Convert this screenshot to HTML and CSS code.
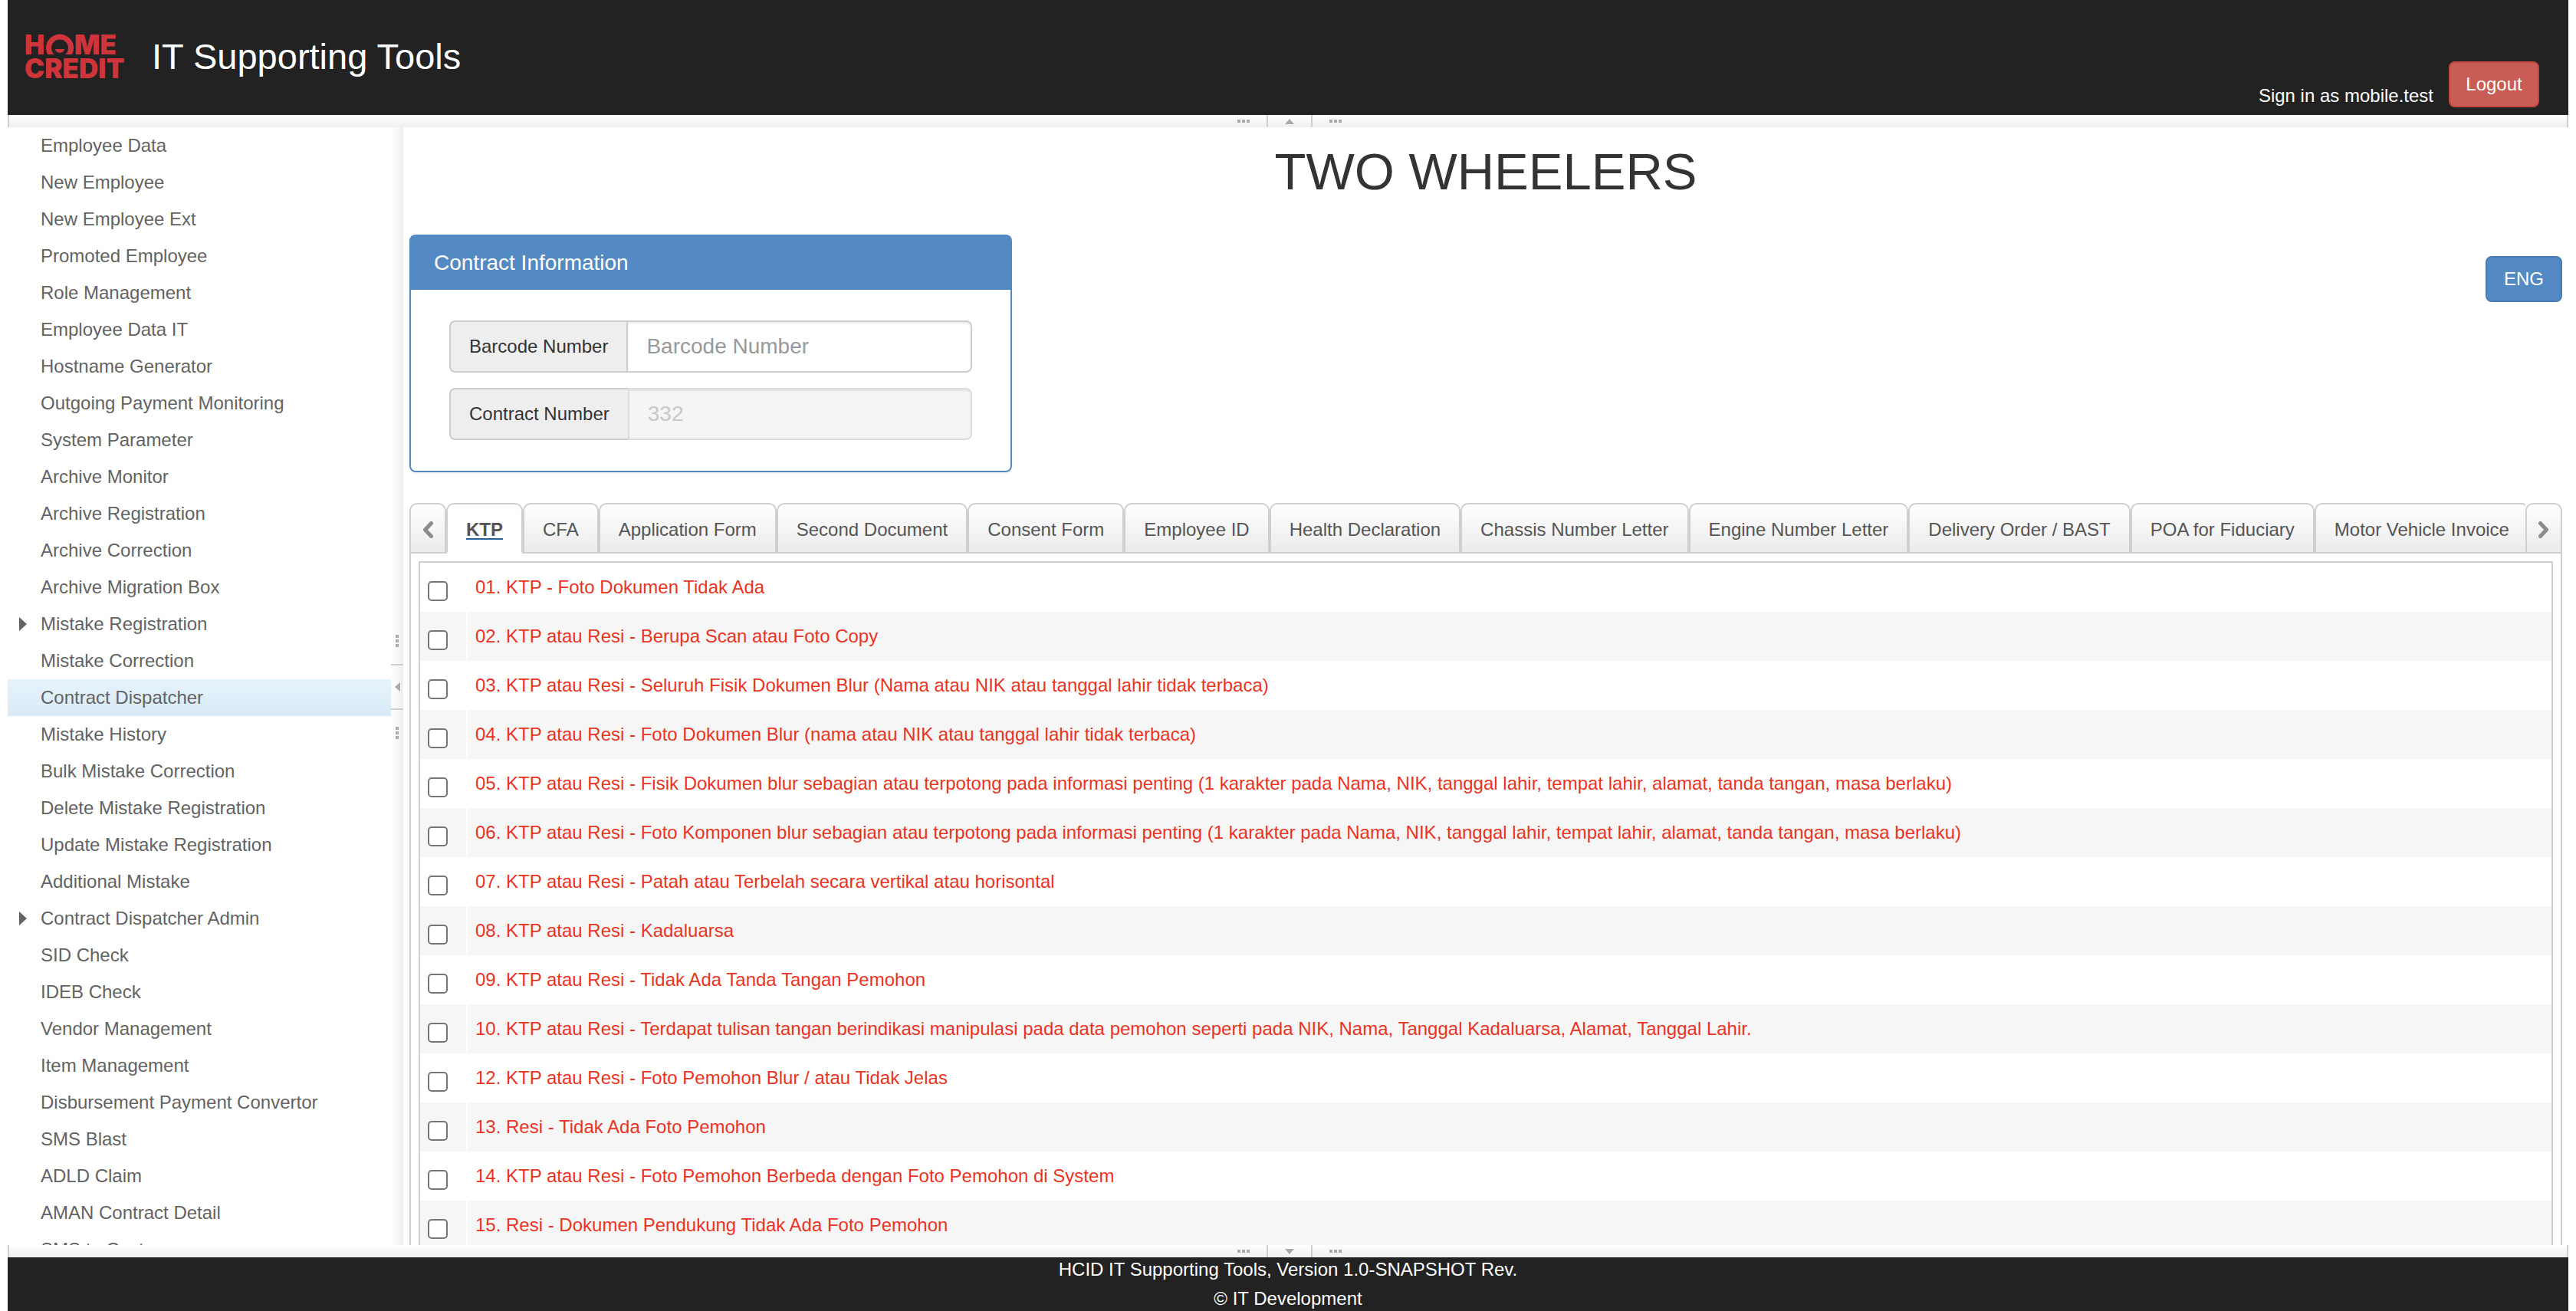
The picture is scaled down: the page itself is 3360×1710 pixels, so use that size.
FILE: index.html
```html
<!DOCTYPE html>
<html lang="en">
<head>
<meta charset="utf-8">
<meta name="viewport" content="width=device-width, initial-scale=1">
<title>IT Supporting Tools</title>
<link rel="stylesheet" href="styles.css">
</head>
<body>
<header class="header">
  <svg class="logo" viewBox="0 0 136 60" role="img" aria-label="Home Credit">
    <text x="0" y="27" class="logo-text">H</text>
    <text x="65" y="27" class="logo-text">ME</text>
    <text x="0" y="58" class="logo-text">CREDIT</text>
    <path d="M30.100 27A18 18 0 1 1 61.900 27H53A11 11 0 1 0 39 27z"/>
    <path d="M40 20h12a6 5 0 0 1-12 0z"/>
  </svg>
  <h1 class="brand">IT Supporting Tools</h1>
  <div class="account">
    <span>Sign in as mobile.test</span>
    <button type="button" class="btn btn-danger">Logout</button>
  </div>
</header>
<div class="splitter">
  <span class="grip"></span>
  <button type="button" class="collapse" aria-label="Collapse header"><svg width="12" height="7" viewBox="0 0 12 7"><path d="M6 0l6 7H0z"/></svg></button>
  <span class="grip"></span>
</div>
<div class="center">
  <nav class="sidebar">
    <ul class="menu">
      <li><a href="#">Employee Data</a></li>
      <li><a href="#">New Employee</a></li>
      <li><a href="#">New Employee Ext</a></li>
      <li><a href="#">Promoted Employee</a></li>
      <li><a href="#">Role Management</a></li>
      <li><a href="#">Employee Data IT</a></li>
      <li><a href="#">Hostname Generator</a></li>
      <li><a href="#">Outgoing Payment Monitoring</a></li>
      <li><a href="#">System Parameter</a></li>
      <li><a href="#">Archive Monitor</a></li>
      <li><a href="#">Archive Registration</a></li>
      <li><a href="#">Archive Correction</a></li>
      <li><a href="#">Archive Migration Box</a></li>
      <li><a href="#" class="parent">Mistake Registration</a></li>
      <li><a href="#">Mistake Correction</a></li>
      <li><a href="#" class="selected">Contract Dispatcher</a></li>
      <li><a href="#">Mistake History</a></li>
      <li><a href="#">Bulk Mistake Correction</a></li>
      <li><a href="#">Delete Mistake Registration</a></li>
      <li><a href="#">Update Mistake Registration</a></li>
      <li><a href="#">Additional Mistake</a></li>
      <li><a href="#" class="parent">Contract Dispatcher Admin</a></li>
      <li><a href="#">SID Check</a></li>
      <li><a href="#">IDEB Check</a></li>
      <li><a href="#">Vendor Management</a></li>
      <li><a href="#">Item Management</a></li>
      <li><a href="#">Disbursement Payment Convertor</a></li>
      <li><a href="#">SMS Blast</a></li>
      <li><a href="#">ADLD Claim</a></li>
      <li><a href="#">AMAN Contract Detail</a></li>
      <li><a href="#">SMS to Customer</a></li>
    </ul>
  </nav>
  <div class="splitter splitter-vertical">
    <span class="grip"></span>
    <button type="button" class="collapse" aria-label="Collapse menu"><svg width="7" height="12" viewBox="0 0 7 12"><path d="M0 6l7-6v12z"/></svg></button>
    <span class="grip"></span>
  </div>
  <main class="main">
    <h2 class="page-title">TWO WHEELERS</h2>
    <div class="top-row">
      <section class="panel">
        <h3 class="panel-heading">Contract Information</h3>
        <div class="panel-body">
          <div class="input-group">
            <label for="barcode">Barcode Number</label>
            <input id="barcode" type="text" placeholder="Barcode Number">
          </div>
          <div class="input-group">
            <label for="contract">Contract Number</label>
            <input id="contract" type="text" value="332" disabled>
          </div>
        </div>
      </section>
      <button type="button" class="btn btn-primary">ENG</button>
    </div>
    <div class="tabbox">
      <div class="tabs">
        <button type="button" class="scroll" aria-label="Previous tabs"><svg width="14" height="22" viewBox="0 0 14 22"><path d="M11.500 2.500L3.500 11l8 8.500"/></svg></button>
        <div class="tab-list">
          <button type="button" class="tab active">KTP</button>
          <button type="button" class="tab">CFA</button>
          <button type="button" class="tab">Application Form</button>
          <button type="button" class="tab">Second Document</button>
          <button type="button" class="tab">Consent Form</button>
          <button type="button" class="tab">Employee ID</button>
          <button type="button" class="tab">Health Declaration</button>
          <button type="button" class="tab">Chassis Number Letter</button>
          <button type="button" class="tab">Engine Number Letter</button>
          <button type="button" class="tab">Delivery Order / BAST</button>
          <button type="button" class="tab">POA for Fiduciary</button>
          <button type="button" class="tab">Motor Vehicle Invoice</button>
        </div>
        <button type="button" class="scroll" aria-label="Next tabs"><svg width="14" height="22" viewBox="0 0 14 22"><path d="M2.500 2.500l8 8.500-8 8.500"/></svg></button>
      </div>
      <div class="tab-panel">
        <table class="mistakes">
          <tbody>
            <tr><td><input type="checkbox" id="m01"></td><td><label for="m01">01. KTP - Foto Dokumen Tidak Ada</label></td></tr>
            <tr><td><input type="checkbox" id="m02"></td><td><label for="m02">02. KTP atau Resi - Berupa Scan atau Foto Copy</label></td></tr>
            <tr><td><input type="checkbox" id="m03"></td><td><label for="m03">03. KTP atau Resi - Seluruh Fisik Dokumen Blur (Nama atau NIK atau tanggal lahir tidak terbaca)</label></td></tr>
            <tr><td><input type="checkbox" id="m04"></td><td><label for="m04">04. KTP atau Resi - Foto Dokumen Blur (nama atau NIK atau tanggal lahir tidak terbaca)</label></td></tr>
            <tr><td><input type="checkbox" id="m05"></td><td><label for="m05">05. KTP atau Resi - Fisik Dokumen blur sebagian atau terpotong pada informasi penting (1 karakter pada Nama, NIK, tanggal lahir, tempat lahir, alamat, tanda tangan, masa berlaku)</label></td></tr>
            <tr><td><input type="checkbox" id="m06"></td><td><label for="m06">06. KTP atau Resi - Foto Komponen blur sebagian atau terpotong pada informasi penting (1 karakter pada Nama, NIK, tanggal lahir, tempat lahir, alamat, tanda tangan, masa berlaku)</label></td></tr>
            <tr><td><input type="checkbox" id="m07"></td><td><label for="m07">07. KTP atau Resi - Patah atau Terbelah secara vertikal atau horisontal</label></td></tr>
            <tr><td><input type="checkbox" id="m08"></td><td><label for="m08">08. KTP atau Resi - Kadaluarsa</label></td></tr>
            <tr><td><input type="checkbox" id="m09"></td><td><label for="m09">09. KTP atau Resi - Tidak Ada Tanda Tangan Pemohon</label></td></tr>
            <tr><td><input type="checkbox" id="m10"></td><td><label for="m10">10. KTP atau Resi - Terdapat tulisan tangan berindikasi manipulasi pada data pemohon seperti pada NIK, Nama, Tanggal Kadaluarsa, Alamat, Tanggal Lahir.</label></td></tr>
            <tr><td><input type="checkbox" id="m12"></td><td><label for="m12">12. KTP atau Resi - Foto Pemohon Blur / atau Tidak Jelas</label></td></tr>
            <tr><td><input type="checkbox" id="m13"></td><td><label for="m13">13. Resi - Tidak Ada Foto Pemohon</label></td></tr>
            <tr><td><input type="checkbox" id="m14"></td><td><label for="m14">14. KTP atau Resi - Foto Pemohon Berbeda dengan Foto Pemohon di System</label></td></tr>
            <tr><td><input type="checkbox" id="m15"></td><td><label for="m15">15. Resi - Dokumen Pendukung Tidak Ada Foto Pemohon</label></td></tr>
          </tbody>
        </table>
      </div>
    </div>
  </main>
</div>
<div class="splitter">
  <span class="grip"></span>
  <button type="button" class="collapse" aria-label="Collapse footer"><svg width="12" height="7" viewBox="0 0 12 7"><path d="M0 0h12L6 7z"/></svg></button>
  <span class="grip"></span>
</div>
<footer class="footer">
  <p>HCID IT Supporting Tools, Version 1.0-SNAPSHOT Rev.</p>
  <p>© IT Development</p>
</footer>
</body>
</html>
```

FILE: styles.css
```css
* { box-sizing: border-box; }

body {
  margin: 0;
  padding: 0 10px;
  height: 100vh;
  display: flex;
  flex-direction: column;
  overflow: hidden;
  background: #fff;
  color: #333;
  font: 24px/34px "Liberation Sans", Arial, sans-serif;
}

h1, h2, h3, p, ul { margin: 0; padding: 0; font-weight: 400; }

button, input { font: inherit; margin: 0; }

/* Header */
.header {
  flex: none;
  display: flex;
  align-items: flex-start;
  padding: 40px 38px 10px 22px;
  background: #222;
  color: #fff;
}

.logo { width: 136px; height: 60px; margin-top: 4px; overflow: visible; fill: #d0343b; }
.logo-text { font: 900 35px "Inter", sans-serif; }

.brand { margin: 6px 0 0 30px; font-size: 47px; line-height: 56px; }

.account {
  display: flex;
  align-items: flex-end;
  gap: 20px;
  margin: 40px 0 0 auto;
}

.account span { line-height: 30px; }

.btn {
  height: 60px;
  padding: 0 20px;
  border: 2px solid;
  border-radius: 8px;
  color: #fff;
}

.btn-danger { background: #c95c54; border-color: #c4473f; min-width: 118px; }
.btn-primary { background: #548ac4; border-color: #457bb6; min-width: 100px; }

/* Splitters */
.splitter {
  flex: none;
  height: 16px;
  display: flex;
  align-items: center;
  justify-content: center;
  gap: 22px;
  border: solid #cfcfcf;
  border-width: 0 2px;
  padding-left: 4px;
  background: linear-gradient(#fff, #efefef);
}

.grip {
  width: 16px;
  height: 4px;
  background: repeating-linear-gradient(to right, #aaa 0 4px, transparent 4px 6px);
}

.collapse {
  display: flex;
  align-items: center;
  justify-content: center;
  width: 60px;
  height: 16px;
  padding: 0;
  border: solid #cfcfcf;
  border-width: 0 2px;
  background: none;
}

.collapse path { fill: #aaa; }

.splitter-vertical {
  flex-direction: column;
  width: 16px;
  height: auto;
  border: 0;
  padding: 2px 0 0;
  background: linear-gradient(to right, #fff, #efefef);
}

.splitter-vertical .grip {
  width: 4px;
  height: 16px;
  background: repeating-linear-gradient(#aaa 0 4px, transparent 4px 6px);
}

.splitter-vertical .collapse { width: 16px; height: 60px; border-width: 2px 0; }

.center { flex: 1; min-height: 0; display: flex; }

/* Menu */
.sidebar { flex: none; width: 500px; overflow: hidden; }
.menu { list-style: none; }

.menu a {
  display: flex;
  align-items: center;
  height: 48px;
  padding-left: 43px;
  color: #636363;
  text-decoration: none;
}

.menu .selected { background: linear-gradient(#e6f3fb, #d8eaf7); }

.menu .parent { padding-left: 15px; }

.menu .parent::before {
  content: "";
  width: 10px;
  height: 18px;
  margin-right: 18px;
  background: #636363;
  clip-path: polygon(0 0, 100% 50%, 0 100%);
}

/* Main area */
.main { flex: 1; min-width: 0; padding: 20px 8px 0; overflow: hidden; }

.page-title { font-size: 67px; line-height: 76px; text-align: center; }

.top-row {
  display: flex;
  justify-content: space-between;
  align-items: flex-start;
  margin-top: 44px;
}

.top-row .btn { margin-top: 28px; }

.panel {
  width: 28%;
  border: 2px solid #548ac4;
  border-radius: 8px;
  box-shadow: 0 2px 2px rgba(0, 0, 0, .05);
}

.panel-heading {
  padding: 19px 30px;
  background: #548ac4;
  color: #fff;
  font-size: 28px;
  line-height: 32px;
}

.panel-body { display: grid; gap: 20px; padding: 40px 50px; }

.input-group { display: flex; height: 68px; }

.input-group label {
  padding: 0 24px;
  border: 2px solid #ccc;
  border-right: 0;
  border-radius: 8px 0 0 8px;
  background: #eee;
  line-height: 64px;
}

.input-group input {
  flex: 1;
  min-width: 0;
  padding: 0 24px;
  border: 2px solid #ccc;
  border-radius: 0 8px 8px 0;
  box-shadow: inset 0 2px 2px rgba(0, 0, 0, .075);
  background: #fff;
  font-size: 28px;
}

.input-group input::placeholder { color: #999; opacity: 1; }
.input-group input:disabled { background: #f5f5f5; border-color: #ddd; color: #c8c8c8; }

/* Tabs */
.tabbox { margin-top: 40px; }

.tabs {
  display: flex;
  height: 66px;
  background: linear-gradient(#cfcfcf, #cfcfcf) bottom / 100% 2px no-repeat;
}

.tab-list { flex: 1; min-width: 0; display: flex; overflow: hidden; }

.tab, .scroll {
  flex: none;
  padding: 4px 24px 0;
  border: 2px solid #cfcfcf;
  border-radius: 10px 10px 0 0;
  background: linear-gradient(#fff, #ebebeb);
  color: #555;
  white-space: nowrap;
}

.tab.active {
  border-bottom-color: #fff;
  background: #fff;
  font-weight: 700;
  text-decoration: underline 2px #2a6496;
  text-underline-offset: 3px;
}

.scroll { display: flex; align-items: center; justify-content: center; width: 48px; padding: 4px 0 0; }
.scroll path { fill: none; stroke: #8c8c8c; stroke-width: 5; stroke-linecap: round; stroke-linejoin: round; }

.tab-panel { padding: 10px; border: solid #cfcfcf; border-width: 0 2px 2px; }

.mistakes {
  width: 100%;
  border: 2px solid #cfcfcf;
  border-spacing: 0;
  color: #ea3323;
}

.mistakes tr { height: 64px; }
.mistakes tr:nth-child(even) { background: #f6f6f6; }
.mistakes td { padding: 0 10px; vertical-align: top; line-height: 64px; }
.mistakes td:first-child { width: 62px; border-right: 2px solid #fff; }

.mistakes input {
  appearance: none;
  display: block;
  width: 26px;
  height: 26px;
  margin-top: 24px;
  border: 2px solid #767676;
  border-radius: 5px;
  background: #fff;
}

/* Footer */
.footer { flex: none; height: 70px; background: #222; color: #fff; text-align: center; line-height: 38px; overflow: hidden; }
.footer p:first-child { margin-top: -3px; }
```
